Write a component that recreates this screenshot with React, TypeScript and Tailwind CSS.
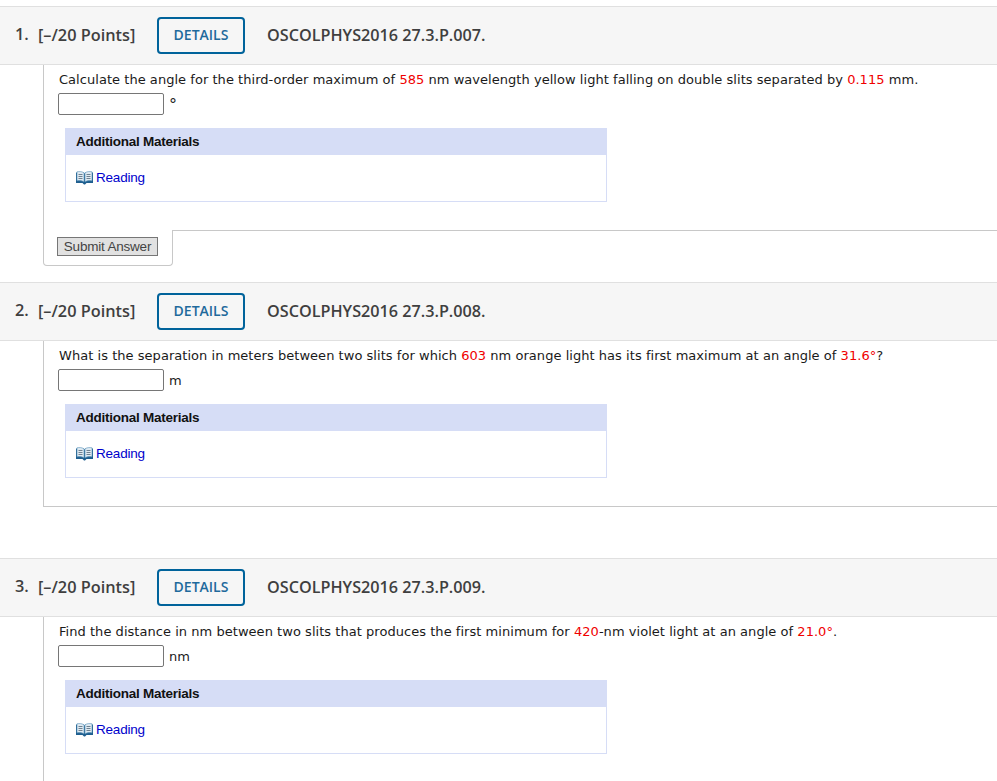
const sans = "font-['Open_Sans',sans-serif]"
const arial = "font-['Liberation_Sans',Arial,sans-serif]"
const verdana = "font-['DejaVu_Sans',Verdana,sans-serif]"

function Red({ children }: { children: React.ReactNode }) {
    return <span className="text-[#f00000]">{children}</span>
}

function BookIcon() {
    return <svg width="17" height="14" viewBox="0 0 17 14" className="shrink-0">
        <path d="M0 1.5h7.5l1 1 1-1H17v10.5h-6.5l-1.5 1.5h-1L6.5 12H0z" fill="#1f5f8f" />
        <path d="M1 0.8c2.5-.5 5-.3 7 1v9c-2-1.2-4.5-1.4-7-1zM16 0.8c-2.5-.5-5-.3-7 1v9c2-1.2 4.5-1.4 7-1z" fill="#dfeaf2" stroke="#5b93bb" strokeWidth="0.6" />
        <path d="M2.5 3.5h4M2.5 5.5h4M2.5 7.5h4M10.5 3.5h4M10.5 5.5h4M10.5 7.5h4" stroke="#6f8190" strokeWidth="1" />
    </svg>
}

function Header({ num, code }: { num: number, code: string }) {
    return <div className={`flex h-[59px] items-center border-y border-[#e0e0e0] bg-[#f6f6f6] pl-[15px] text-[#3f3f3f] ${sans}`}>
        <span className="w-[23px] -translate-y-px text-[16.3px] font-semibold">{num}.</span>
        <span className="w-[119px] text-[16.3px] font-semibold">[–/20 Points]</span>
        <div className="flex h-[37px] w-[88px] items-center justify-center rounded-[4px] border-2 border-[#00639b] text-[14px] font-semibold text-[#1f6a9c]">
            <span className="-translate-y-px">DETAILS</span>
        </div>
        <span className="ml-[22px] text-[16.2px] font-semibold">{code}</span>
    </div>
}

function Materials() {
    return <div className="ml-[21px] mt-[13px] w-[542px] border border-[#d6ddf6]">
        <div className={`flex h-[26px] items-center bg-[#d6ddf6] pl-[10px] text-[13.5px] font-bold tracking-[-0.25px] text-[#111] ${arial}`}>
            Additional Materials
        </div>
        <div className={`flex h-[46px] items-center pl-[10px] text-[13.5px] tracking-[-0.2px] text-[#0000cc] ${arial}`}>
            <BookIcon />
            <span className="ml-[3px]">Reading</span>
        </div>
    </div>
}

function Question({ text, unit }: { text: React.ReactNode, unit: string }) {
    return <div className="pt-[6px]">
        <div className={`translate-y-px pl-[15px] text-[13px] leading-[16px] tracking-[0.04px] text-[#1a1a1a] ${verdana}`}>{text}</div>
        <div className="mt-[6px] flex h-[22px] items-center pl-[14px]">
            <div className="h-[22px] w-[106px] rounded-[2px] border border-[#767676] bg-white" />
            <span className={`ml-[5px] translate-y-px text-[#1a1a1a] ${unit === "°" ? "text-[16px]" : "text-[13px]"} ${verdana}`}>{unit}</span>
        </div>
    </div>
}

export default function App() {
    return <div className="h-[781px] overflow-hidden bg-white pt-[6px]">
        <Header num={1} code="OSCOLPHYS2016 27.3.P.007." />
        <div className="ml-[43px]">
            <div className="h-[165px] border-l border-[#c8c8c8]">
                <Question
                    text={<>Calculate the angle for the third-order maximum of <Red>585</Red> nm wavelength yellow light falling on double slits separated by <Red>0.115</Red> mm.</>}
                    unit="°"
                />
                <Materials />
            </div>
            <div className="flex">
                <div className="flex h-[36px] w-[130px] items-start rounded-b-[4px] border-x border-b border-[#c8c8c8] pl-[13px] pt-[7px]">
                    <div className={`flex h-[19px] w-[101px] items-center justify-center border border-[#767676] bg-[#e1e1e1] text-[13.5px] tracking-[-0.2px] text-[#444] ${arial}`}>
                        <span className="translate-y-px">Submit Answer</span>
                    </div>
                </div>
                <div className="h-[36px] flex-1 border-t border-[#c8c8c8]" />
            </div>
        </div>

        <div className="mt-[16px]">
            <Header num={2} code="OSCOLPHYS2016 27.3.P.008." />
        </div>
        <div className="ml-[43px] h-[166px] border-b border-l border-[#c8c8c8]">
            <Question
                text={<>What is the separation in meters between two slits for which <Red>603</Red> nm orange light has its first maximum at an angle of <Red>31.6°</Red>?</>}
                unit="m"
            />
            <Materials />
        </div>

        <div className="mt-[51px]">
            <Header num={3} code="OSCOLPHYS2016 27.3.P.009." />
        </div>
        <div className="ml-[43px] h-[170px] border-l border-[#c8c8c8]">
            <Question
                text={<>Find the distance in nm between two slits that produces the first minimum for <Red>420</Red>-nm violet light at an angle of <Red>21.0°</Red>.</>}
                unit="nm"
            />
            <Materials />
        </div>
    </div>
}
